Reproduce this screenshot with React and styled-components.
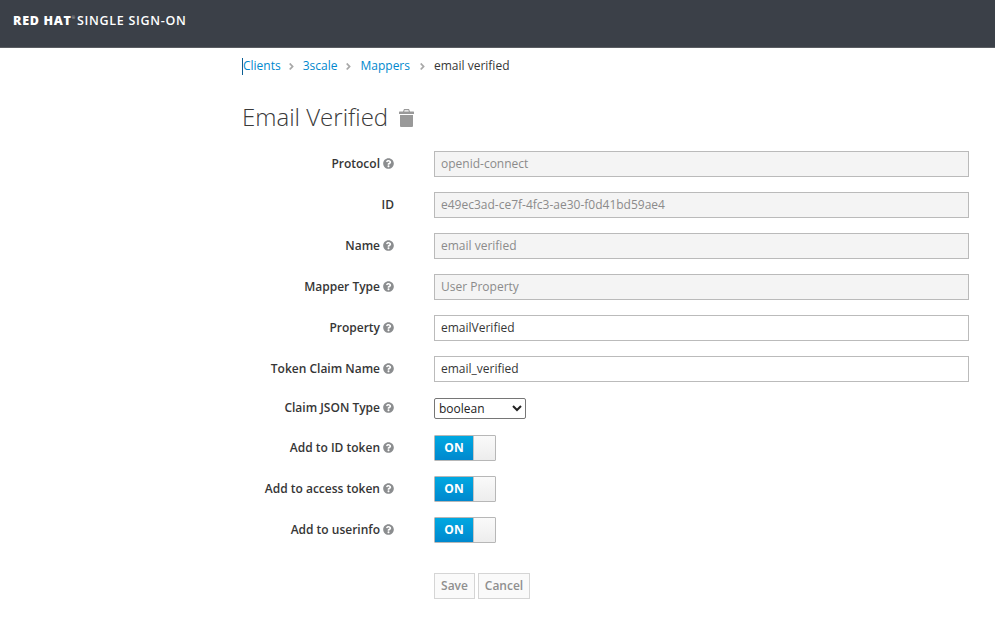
import React from 'react';
import styled, { createGlobalStyle } from 'styled-components';
import { FaQuestionCircle, FaAngleRight } from 'react-icons/fa';

const GlobalStyle = createGlobalStyle`
    html, body {
        margin: 0;
        padding: 0;
        background: #fff;
        font-family: "Open Sans", "Liberation Sans", sans-serif;
        font-size: 12px;
        color: #363636;
    }
`;

const Header = styled.header`
    height: 47px;
    background: #3b4048;
    border-bottom: 1px solid #5a5d62;
    padding-left: 13px;
    display: flex;
    align-items: center;
`;

const Logo = styled.div`
    display: flex;
    align-items: flex-start;
    color: #fff;
    font-size: 12.5px;
    letter-spacing: 0.7px;
    line-height: 14px;
    margin-top: -6px;
    white-space: nowrap;
`;

const LogoBold = styled.span`
    font-weight: 800;
`;

const LogoLight = styled.span`
    font-weight: 600;
`;

const LogoMark = styled.span`
    font-size: 4px;
    line-height: 8px;
    letter-spacing: 0;
    margin: 0 2px 0 0;
    color: #d0d0d0;
`;

const Main = styled.main`
    padding: 9px 26px 0 243px;
`;

const Crumbs = styled.nav`
    display: flex;
    align-items: center;
    height: 18px;
`;

const CrumbLink = styled.a`
    color: #0088ce;
    text-decoration: none;
    border-left: ${(props) => (props.caret ? '1px solid #0b5f93' : '0')};
    margin-left: ${(props) => (props.caret ? '-1px' : '0')};
    line-height: 17px;
    height: 17px;
`;

const CrumbText = styled.span`
    display: block;
    margin-top: -1px;
`;

const CrumbSep = styled.span`
    display: flex;
    justify-content: center;
    color: #a8a8a8;
    width: ${(props) => props.width};
    font-size: 11px;
`;

const Title = styled.h1`
    display: flex;
    align-items: center;
    margin: 25px 0 17px -1px;
    height: 34px;
    font-size: 24px;
    font-weight: 300;
    color: #3a3a3a;
    line-height: 34px;
`;

const TrashIcon = styled.svg`
    width: 15px;
    height: 18px;
    margin-left: 11px;
    margin-top: 2px;
    fill: #999;
`;

const Row = styled.div`
    display: flex;
    align-items: center;
    height: ${(props) => props.height || '26px'};
    margin-bottom: 15px;
`;

const Label = styled.label`
    width: 151px;
    margin-right: 40px;
    margin-top: -2px;
    display: flex;
    justify-content: flex-end;
    align-items: center;
    font-weight: 600;
    color: #363636;
    white-space: nowrap;
`;

const HelpIcon = styled(FaQuestionCircle)`
    width: 11px;
    height: 11px;
    margin-left: 3px;
    color: #8b8d8f;
`;

const Input = styled.input`
    flex: 1;
    height: 26px;
    box-sizing: border-box;
    padding: 0 6px 2px;
    border: 1px solid ${(props) => (props.disabled ? '#bababa' : '#bbb')};
    background: ${(props) => (props.disabled ? '#f4f4f4' : '#fff')};
    color: ${(props) => (props.disabled ? '#8b8b8b' : '#363636')};
    font-family: inherit;
    font-size: 12px;
    outline: none;
    border-radius: 0;
`;

const Select = styled.select`
    width: 92px;
    height: 21px;
    padding-bottom: 3px;
    font-family: inherit;
    font-size: 12px;
    color: #222;
    background: #fff;
    border: 1px solid #767676;
    border-radius: 2px;
`;

const Toggle = styled.div`
    width: 62px;
    height: 26px;
    box-sizing: border-box;
    display: flex;
    border: 1px solid #b7b7b7;
    border-radius: 1px;
`;

const ToggleOn = styled.div`
    width: 38px;
    padding-bottom: 1px;
    box-sizing: border-box;
    display: flex;
    align-items: center;
    justify-content: center;
    background: linear-gradient(#00a8e1, #0088ce);
    color: #fff;
    font-weight: 700;
    font-size: 12px;
`;

const ToggleKnob = styled.div`
    flex: 1;
    background: linear-gradient(#fafafa, #ededed);
    border-left: 1px solid #c4c4c4;
`;

const Actions = styled.div`
    display: flex;
    gap: 3px;
    margin-top: 30px;
    margin-left: 191px;
`;

const Button = styled.button`
    height: 26px;
    width: ${(props) => props.width};
    padding: 0 0 2px;
    box-sizing: border-box;
    border: 1px solid #d5d5d5;
    background: #fafafa;
    color: #8f8f8f;
    font-family: inherit;
    font-size: 12px;
    font-weight: 600;
`;

const readOnlyFields = [
    { label: 'Protocol', value: 'openid-connect', help: true },
    { label: 'ID', value: 'e49ec3ad-ce7f-4fc3-ae30-f0d41bd59ae4' },
    { label: 'Name', value: 'email verified', help: true },
    { label: 'Mapper Type', value: 'User Property', help: true },
];

const textFields = [
    { label: 'Property', value: 'emailVerified' },
    { label: 'Token Claim Name', value: 'email_verified' },
];

const toggles = ['Add to ID token', 'Add to access token', 'Add to userinfo'];

const App = () => {
    return (
        <>
            <GlobalStyle />
            <Header>
                <Logo>
                    <LogoBold>RED HAT</LogoBold>
                    <LogoMark>®</LogoMark>
                    <LogoLight>SINGLE SIGN-ON</LogoLight>
                </Logo>
            </Header>
            <Main>
                <Crumbs>
                    <CrumbLink caret href="#"><CrumbText>Clients</CrumbText></CrumbLink>
                    <CrumbSep width="22px"><FaAngleRight /></CrumbSep>
                    <CrumbLink href="#"><CrumbText>3scale</CrumbText></CrumbLink>
                    <CrumbSep width="23px"><FaAngleRight /></CrumbSep>
                    <CrumbLink href="#"><CrumbText>Mappers</CrumbText></CrumbLink>
                    <CrumbSep width="24px"><FaAngleRight /></CrumbSep>
                    <CrumbText>email verified</CrumbText>
                </Crumbs>
                <Title>
                    Email Verified
                    <TrashIcon viewBox="0 0 15 18">
                        <path fillRule="evenodd" d="M5 0h5l1 2.5h3.5a.5.5 0 0 1 .5.5v2H0V3a.5.5 0 0 1 .5-.5H4zM5.6 1.2 5.2 2.5h4.6l-.4-1.3zM1 6h13v11a1 1 0 0 1-1 1H2a1 1 0 0 1-1-1z" />
                    </TrashIcon>
                </Title>
                {readOnlyFields.map((f) => (
                    <Row key={f.label}>
                        <Label>{f.label}{f.help && <HelpIcon />}</Label>
                        <Input disabled value={f.value} readOnly />
                    </Row>
                ))}
                {textFields.map((f) => (
                    <Row key={f.label}>
                        <Label>{f.label}<HelpIcon /></Label>
                        <Input defaultValue={f.value} />
                    </Row>
                ))}
                <Row height="23px">
                    <Label>Claim JSON Type<HelpIcon /></Label>
                    <Select defaultValue="boolean">
                        <option>boolean</option>
                        <option>String</option>
                    </Select>
                </Row>
                {toggles.map((t) => (
                    <Row key={t}>
                        <Label>{t}<HelpIcon /></Label>
                        <Toggle>
                            <ToggleOn>ON</ToggleOn>
                            <ToggleKnob />
                        </Toggle>
                    </Row>
                ))}
                <Actions>
                    <Button width="41px">Save</Button>
                    <Button width="52px">Cancel</Button>
                </Actions>
            </Main>
        </>
    );
};

export default App;
